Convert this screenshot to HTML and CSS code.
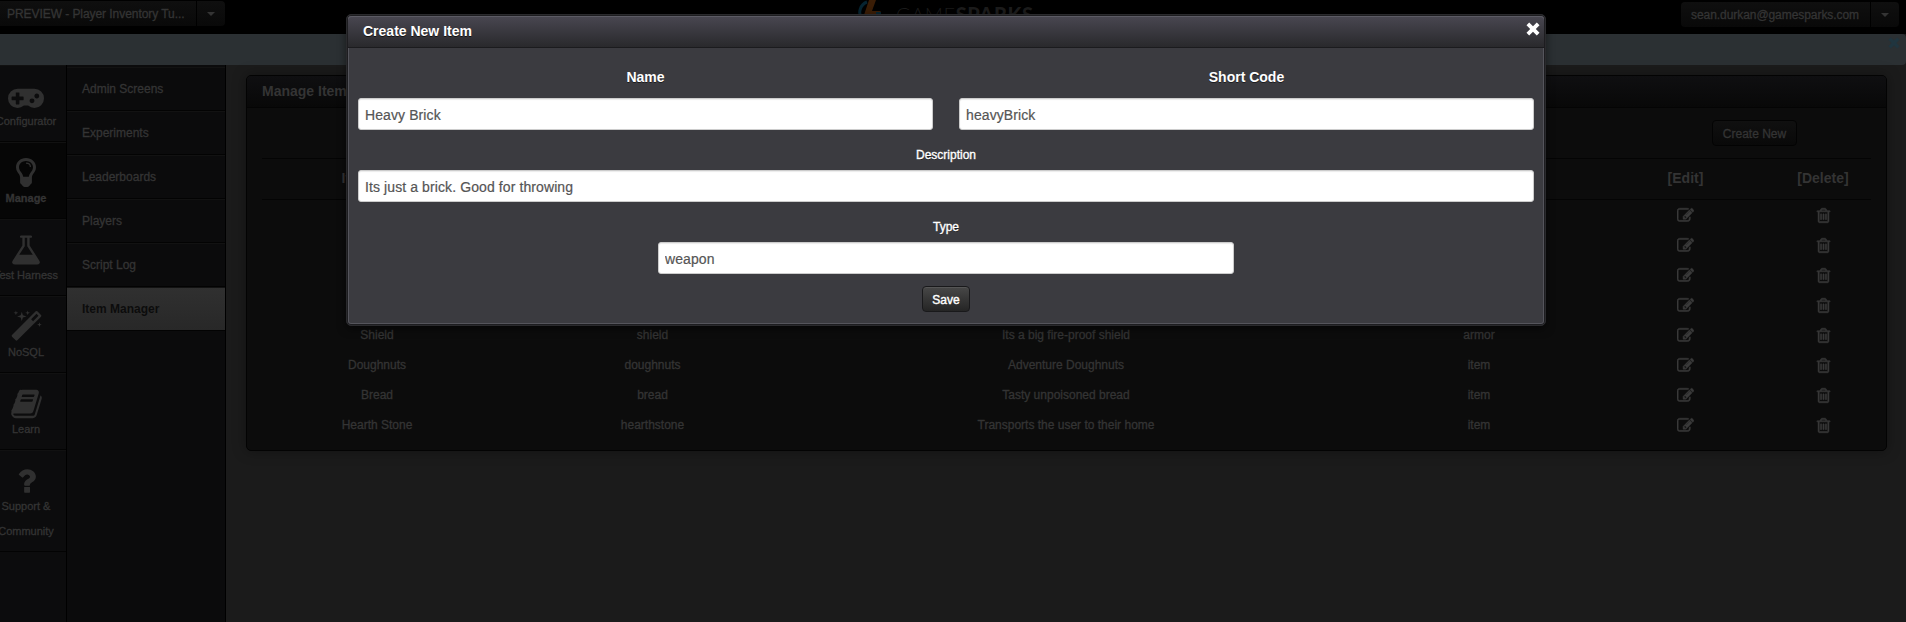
FILE: index.html
```html
<!DOCTYPE html>
<html lang="en">
<head>
<meta charset="utf-8">
<title>GameSparks - Item Manager</title>
<link rel="stylesheet" href="styles.css">
</head>
<body>
<svg class="defs" width="0" height="0" aria-hidden="true">
  <symbol id="edit" viewBox="0 0 1792 1792"><path d="M888 1184l116-116-152-152-116 116v56h96v96h56zm440-720q-16-16-33 1l-350 350q-17 17-1 33t33-1l350-350q17-17 1-33zm80 594v190q0 119-84.500 203.500t-203.500 84.500h-832q-119 0-203.500-84.500t-84.500-203.500v-832q0-119 84.500-203.500t203.500-84.500h832q63 0 117 25 15 7 18 23 3 17-9 29l-49 49q-14 14-32 8-23-6-45-6h-832q-66 0-113 47t-47 113v832q0 66 47 113t113 47h832q66 0 113-47t47-113v-126q0-13 9-22l64-64q15-15 35-7t20 29zm-96-738l288 288-672 672h-288v-288zm444 132l-92 92-288-288 92-92q28-28 68-28t68 28l152 152q28 28 28 68t-28 68z"/></symbol>
  <symbol id="trash" viewBox="0 0 1792 1792"><path d="M704 736v576q0 14-9 23t-23 9h-64q-14 0-23-9t-9-23v-576q0-14 9-23t23-9h64q14 0 23 9t9 23zm256 0v576q0 14-9 23t-23 9h-64q-14 0-23-9t-9-23v-576q0-14 9-23t23-9h64q14 0 23 9t9 23zm256 0v576q0 14-9 23t-23 9h-64q-14 0-23-9t-9-23v-576q0-14 9-23t23-9h64q14 0 23 9t9 23zm128 724v-948h-896v948q0 22 7 40.500t14.500 27 10.500 8.500h832q3 0 10.500-8.500t14.500-27 7-40.500zm-672-1076h448l-48-117q-7-9-17-11h-317q-10 2-17 11zm928 32v64q0 14-9 23t-23 9h-96v948q0 83-47 143.500t-113 60.500h-832q-66 0-113-58.500t-47-141.500v-952h-96q-14 0-23-9t-9-23v-64q0-14 9-23t23-9h309l70-167q15-37 54-63t79-26h320q40 0 79 26t54 63l70 167h309q14 0 23 9t9 23z"/></symbol>
  <symbol id="times" viewBox="0 0 14 14"><path d="M3.200 0.500L7 4.200 10.800 0.500 13.500 3.200 9.800 7 13.500 10.800 10.800 13.500 7 9.800 3.200 13.500 0.500 10.800 4.200 7 0.500 3.200z"/></symbol>
</svg>

<header class="topbar">
  <div class="picker picker-game"><span>PREVIEW - Player Inventory Tu...</span><b class="caret"></b></div>
  <div class="logo">
    <svg width="28" height="28" viewBox="0 0 28 28"><path d="M10 2A11 11 0 0 0 5 19" fill="none" stroke="#062431" stroke-width="3"/><path d="M12 0h7l-4 11h9L10 28l3-13H7z" fill="#3a1d06"/><path d="M19 12h5v6h-5z" fill="#062431"/></svg>
    <span class="logo-thin">GAME</span><span class="logo-heavy">SPARKS</span>
  </div>
  <div class="picker picker-user"><span>sean.durkan@gamesparks.com</span><b class="caret"></b></div>
</header>

<div class="alert"><svg width="12" height="12"><use href="#times"/></svg></div>

<div class="shell">
  <nav class="nav">
    <a class="nav-item"><svg width="36" height="34" viewBox="0 0 1920 1792"><path d="M832 1088v-128q0-14-9-23t-23-9h-192v-192q0-14-9-23t-23-9h-128q-14 0-23 9t-9 23v192h-192q-14 0-23 9t-9 23v128q0 14 9 23t23 9h192v192q0 14 9 23t23 9h128q14 0 23-9t9-23v-192h192q14 0 23-9t9-23zm576 64q0-53-37.500-90.500t-90.500-37.500-90.500 37.500-37.500 90.500 37.500 90.500 90.500 37.500 90.500-37.500 37.500-90.500zm256-256q0-53-37.500-90.500t-90.500-37.500-90.500 37.500-37.500 90.500 37.500 90.500 90.500 37.500 90.500-37.500 37.500-90.500zm256 128q0 212-150 362t-362 150q-192 0-338-128h-220q-146 128-338 128-212 0-362-150t-150-362 150-362 362-150h896q212 0 362 150t150 362z"/></svg><span>Configurator</span></a>
    <a class="nav-item is-active"><svg width="34" height="34" viewBox="0 0 34 34"><path fill-rule="evenodd" d="M17 2C11.300 2 7 6 7 11.200c0 3.200 1.700 5 2.900 6.900.8 1.300 1.100 2.200 1.200 3.600v4.500c0 1 .6 1.700 1.500 2.200.8 1.700 2.200 2.600 4.400 2.600s3.600-.9 4.400-2.600c.9-.5 1.500-1.200 1.500-2.200v-4.500c.1-1.400.4-2.300 1.200-3.600 1.200-1.900 2.900-3.700 2.900-6.900C27 6 22.700 2 17 2zm0 2.900c4 0 7 2.800 7 6.300 0 2.600-1.500 4-2.700 5.900-.8 1.300-1.300 2.300-1.500 3.600h-5.600c-.2-1.300-.7-2.300-1.500-3.600-1.200-1.900-2.700-3.300-2.700-5.900 0-3.500 3-6.300 7-6.300z"/><path d="M17 7.200c2.500 0 4.400 1.500 4.400 3.800" fill="none" stroke="currentColor" stroke-width="1.300"/></svg><span>Manage</span></a>
    <a class="nav-item"><svg width="34" height="34" viewBox="0 0 1792 1792"><path d="M1591 1448q56 89 21.500 152.500t-140.500 63.500h-1152q-106 0-140.500-63.500t21.500-152.500l503-793v-399h-64q-26 0-45-19t-19-45 19-45 45-19h512q26 0 45 19t19 45-19 45-45 19h-64v399zm-779-725l-272 429h712l-272-429-20-31v-436h-128v436z"/></svg><span>Test Harness</span></a>
    <a class="nav-item"><svg width="33" height="34" viewBox="0 0 1792 1792"><path d="M1254 581l293-293-107-107-293 293zm447-293q0 27-18 45l-1286 1286q-18 18-45 18t-45-18l-198-198q-18-18-18-45t18-45l1286-1286q18-18 45-18t45 18l198 198q18 18 18 45zm-1351-190l98 30-98 30-30 98-30-98-98-30 98-30 30-98zm350 162l196 60-196 60-60 196-60-196-196-60 196-60 60-196zm930 478l98 30-98 30-30 98-30-98-98-30 98-30 30-98zm-640-640l98 30-98 30-30 98-30-98-98-30 98-30 30-98z"/></svg><span>NoSQL</span></a>
    <a class="nav-item"><svg width="33" height="34" viewBox="0 0 1792 1792"><path d="M1703 478q40 57 18 129l-275 906q-19 64-76.500 107.500t-122.500 43.500h-923q-77 0-148.500-53.500t-99.500-131.500q-24-67-2-127 0-4 3-27t4-37q1-8-3-21.500t-3-19.500q2-11 8-21t16.500-23.500 16.500-23.500q23-38 45-91.500t30-91.500q3-10 .5-30t-.5-28q3-11 17-28t17-23q21-36 42-92t25-90q1-9-2.500-32t.5-28q4-13 22-30.500t22-22.500q19-26 42.500-84.500t27.500-96.500q1-8-3-25.500t-2-26.500q2-8 9-18t18-23 17-21q8-12 16.500-30.500t15-35 16-36 19.500-32 26.500-23.500 36-11.500 47.500 5.500l-1 3q38-9 51-9h761q74 0 114 56t18 130l-274 906q-36 119-71.500 153.500t-128.500 34.500h-869q-27 0-38 15-11 16-1 43 24 70 144 70h923q29 0 56-15.500t35-41.500l300-987q7-22 5-57 38 15 59 43zm-1064 2q-4 13 2 22.500t20 9.500h608q13 0 25.500-9.500t16.500-22.500l21-64q4-13-2-22.500t-20-9.500h-608q-13 0-25.500 9.500t-16.500 22.500zm-83 256q-4 13 2 22.500t20 9.500h608q13 0 25.500-9.500t16.500-22.500l21-64q4-13-2-22.500t-20-9.500h-608q-13 0-25.500 9.500t-16.500 22.500z"/></svg><span>Learn</span></a>
    <a class="nav-item"><svg width="33" height="34" viewBox="0 0 1792 1792"><path d="M1088 1256v240q0 16-12 28t-28 12h-240q-16 0-28-12t-12-28v-240q0-16 12-28t28-12h240q16 0 28 12t12 28zm316-600q0 54-15.500 101t-35 76.500-55 59.500-57.500 43.500-61 35.500q-41 23-68.500 65t-27.500 67q0 17-12 32.500t-28 15.500h-240q-15 0-25.500-18.500t-10.500-37.500v-45q0-83 65-156.500t143-108.500q59-27 84-56t25-76q0-42-46.500-74t-107.500-32q-65 0-108 29-35 25-107 115-13 16-31 16-12 0-25-8l-164-125q-13-10-15.500-25t5.500-28q160-266 464-266 80 0 161 31t146 83 106 127.500 41 158.500z"/></svg><span>Support &amp;<br>Community</span></a>
  </nav>

  <nav class="subnav">
    <a>Admin Screens</a>
    <a>Experiments</a>
    <a>Leaderboards</a>
    <a>Players</a>
    <a>Script Log</a>
    <a class="is-current">Item Manager</a>
  </nav>

  <main class="content">
    <section class="panel">
      <h2 class="panel-title">Manage Items</h2>
      <div class="panel-body">
        <div class="toolbar"><button class="btn">Create New</button></div>
        <div class="row row-head"><span>Item Name</span><span>Short Code</span><span>Description</span><span>Type</span><span>[Edit]</span><span>[Delete]</span></div>
        <div class="row"><span></span><span></span><span></span><span></span><svg><use href="#edit"/></svg><svg><use href="#trash"/></svg></div>
        <div class="row"><span></span><span></span><span></span><span></span><svg><use href="#edit"/></svg><svg><use href="#trash"/></svg></div>
        <div class="row"><span></span><span></span><span></span><span></span><svg><use href="#edit"/></svg><svg><use href="#trash"/></svg></div>
        <div class="row"><span></span><span></span><span></span><span></span><svg><use href="#edit"/></svg><svg><use href="#trash"/></svg></div>
        <div class="row"><span>Shield</span><span>shield</span><span>Its a big fire-proof shield</span><span>armor</span><svg><use href="#edit"/></svg><svg><use href="#trash"/></svg></div>
        <div class="row"><span>Doughnuts</span><span>doughnuts</span><span>Adventure Doughnuts</span><span>item</span><svg><use href="#edit"/></svg><svg><use href="#trash"/></svg></div>
        <div class="row"><span>Bread</span><span>bread</span><span>Tasty unpoisoned bread</span><span>item</span><svg><use href="#edit"/></svg><svg><use href="#trash"/></svg></div>
        <div class="row"><span>Hearth Stone</span><span>hearthstone</span><span>Transports the user to their home</span><span>item</span><svg><use href="#edit"/></svg><svg><use href="#trash"/></svg></div>
      </div>
    </section>
  </main>
</div>

<div class="modal">
  <div class="modal-head"><h3>Create New Item</h3><svg width="14" height="14"><use href="#times"/></svg></div>
  <form class="modal-body">
    <div class="pair">
      <label class="strong">Name<input value="Heavy Brick"></label>
      <label class="strong">Short Code<input value="heavyBrick"></label>
    </div>
    <label>Description<input value="Its just a brick. Good for throwing"></label>
    <label class="narrow">Type<input value="weapon"></label>
    <button type="button" class="btn btn-save">Save</button>
  </form>
</div>
</body>
</html>
```
FILE: styles.css
```css
* { box-sizing: border-box; }

body {
  margin: 0;
  height: 622px;
  overflow: hidden;
  display: flex;
  flex-direction: column;
  background: #1b1b1b;
  color: #343434;
  font: 12px/18px "Liberation Sans", Arial, sans-serif;
}

.defs { position: absolute; }
svg { display: block; fill: currentColor; flex: none; }

/* Top bar */
.topbar {
  flex: none;
  height: 34px;
  background: #000;
  display: grid;
  grid-template-columns: 1fr auto 1fr;
  align-items: start;
}
.picker {
  display: flex;
  height: 25px;
  line-height: 26px;
  letter-spacing: -.06px;
  background: linear-gradient(#0f0f0f, #090909);
  border-radius: 4px;
  -webkit-text-stroke: .3px;
}
.picker .caret {
  width: 29px;
  border-left: 1px solid #000;
  display: flex;
  align-items: center;
  justify-content: center;
}
.caret::before {
  content: "";
  border: 4px solid transparent;
  border-top-color: #343434;
  border-bottom: 0;
}
.picker-game { justify-self: start; margin-left: -4px; margin-top: 1px; width: 229px; padding-left: 11px; justify-content: space-between; }
.picker-user { justify-self: end; margin: 2px 7px 0 0; padding-left: 10px; width: 218px; justify-content: space-between; }

.logo { display: flex; height: 28px; width: 184px; margin-right: 8px; overflow: hidden; font: 20px/24px Lato, sans-serif; letter-spacing: .55px; color: #1c1c1c; }
.logo svg { margin-right: 11px; }
.logo span { padding-top: 2px; }
.logo-thin { font-weight: 300; }
.logo-heavy { font-weight: 900; }

.alert {
  flex: none;
  height: 31px;
  background: #2b3033;
  border-radius: 0 4px 4px 0;
  color: #20353f;
  display: flex;
  justify-content: flex-end;
  padding: 3px 6px;
}

/* Side navigation */
.shell { flex: 1; display: flex; min-height: 0; }
.nav {
  width: 67px;
  background: #0c0c0d;
  border-right: 1px solid #000;
  overflow: hidden;
  flex: none;
}
.nav-item {
  width: 80px;
  margin-left: -14px;
  height: 77px;
  padding-top: 14px;
  display: flex;
  flex-direction: column;
  align-items: center;
  font-size: 11px;
  line-height: 25px;
  text-align: center;
  white-space: nowrap;
  border-bottom: 1px solid #030303;
  box-shadow: inset 0 1px #111;
  -webkit-text-stroke: .3px;
}
.nav-item svg { color: #303030; }
.nav-item span { margin-top: -4px; }
.nav-item.is-active { background: #060606; font-weight: bold; }
.nav-item:last-child { height: 102px; }

.subnav {
  flex: none;
  width: 159px;
  background: #0b0b0c;
  border-right: 1px solid #000;
  padding-top: 2px;
  display: flex;
  flex-direction: column;
}
.subnav a {
  height: 44px;
  line-height: 45px;
  padding-left: 15px;
  border-bottom: 1px solid #030303;
  box-shadow: inset 0 1px #121212;
  -webkit-text-stroke: .3px;
}
.subnav .is-current {
  line-height: 44px;
  background: linear-gradient(#303030, #282828);
  color: #0c0c0c;
  font-weight: bold;
  -webkit-text-stroke: 0;
}

/* Item table */
.content { flex: 1; padding: 10px 19px 0 20px; }
.panel {
  height: 376px;
  border: 1px solid #030303;
  border-radius: 5px;
  background: #0c0c0c;
  box-shadow: 0 0 14px rgba(0, 0, 0, .35);
}
.panel-title {
  margin: 0;
  height: 32px;
  padding-left: 15px;
  font-size: 14px;
  line-height: 31px;
  background: linear-gradient(#0f0f11, #080808);
  border-bottom: 1px solid #040404;
  border-radius: 4px 4px 0 0;
}
.panel-body { padding: 0 15px; }
.toolbar { height: 51px; padding: 12px 74px 0 0; display: flex; justify-content: flex-end; border-bottom: 1px solid #040404; }
.btn {
  width: 85px;
  height: 26px;
  padding: 2px 0 0;
  border: 1px solid #030303;
  border-radius: 4px;
  background: linear-gradient(#101010, #090909);
  color: #343434;
  font: 12px/22px "Liberation Sans", Arial, sans-serif;
  -webkit-text-stroke: .3px;
}
.row {
  display: grid;
  grid-template-columns: 230px 321px 506px 276px 181px 94px;
  height: 30px;
  align-items: center;
  justify-items: center;
  -webkit-text-stroke: .3px;
}
.row > :nth-child(4) { padding-left: 44px; }
.row svg { width: 17px; height: 17px; color: #3a3a3a; stroke: currentColor; stroke-width: 50px; }
.row-head { height: 41px; padding-bottom: 2px; font-size: 14px; font-weight: bold; border-bottom: 1px solid #040404; -webkit-text-stroke: 0; }

/* Dialog */
.modal {
  position: absolute;
  left: 346px;
  top: 14px;
  width: 1200px;
  height: 312px;
  border: 1px solid #2a2a2d;
  border-radius: 5px;
  background: #3b3b40;
  box-shadow: inset 0 0 0 1px #1d1d20, inset 0 0 0 2px #55555c, 0 3px 8px rgba(0, 0, 0, .5);
  color: #fff;
}
.modal-head {
  margin: 1px;
  height: 32px;
  padding: 0 4px 0 15px;
  display: flex;
  justify-content: space-between;
  background: linear-gradient(#494751, #29292c);
  border-bottom: 1px solid #1b1b1e;
  box-shadow: inset 0 1px #5c5b64;
  border-radius: 4px 4px 0 0;
}
.modal-head h3 { margin: 0; font-size: 14px; line-height: 31px; text-shadow: 0 1px #111; }
.modal-head svg { margin-top: 6px; }
.modal-body { padding: 0 11px; display: flex; flex-direction: column; align-items: center; }
.pair { display: grid; grid-template-columns: 1fr 1fr; gap: 26px; width: 100%; }
.modal label {
  width: 100%;
  display: flex;
  flex-direction: column;
  text-align: center;
  line-height: 18px;
  padding-top: 16px;
  -webkit-text-stroke: .35px;
  text-shadow: 0 1px #1c1c1e;
}
.modal label.strong { font-size: 14px; font-weight: bold; padding-top: 19px; -webkit-text-stroke: 0; }
.modal label.narrow { width: 576px; }
.modal input {
  width: 100%;
  height: 32px;
  margin-top: 6px;
  padding: 1px 6px 0;
  border: 1px solid #ccc;
  border-radius: 3px;
  box-shadow: inset 0 1px 1px rgba(0, 0, 0, .08);
  background: #fff;
  color: #555;
  font: 14px "Liberation Sans", Arial, sans-serif;
  letter-spacing: .1px;
  -webkit-text-stroke: .2px;
}
.modal label.strong input { margin-top: 12px; }
.btn-save {
  width: 48px;
  margin-top: 12px;
  border-color: #19191b;
  background: linear-gradient(#474747, #252525);
  box-shadow: inset 0 1px #555;
  color: #fff;
  -webkit-text-stroke: .4px;
}
```
